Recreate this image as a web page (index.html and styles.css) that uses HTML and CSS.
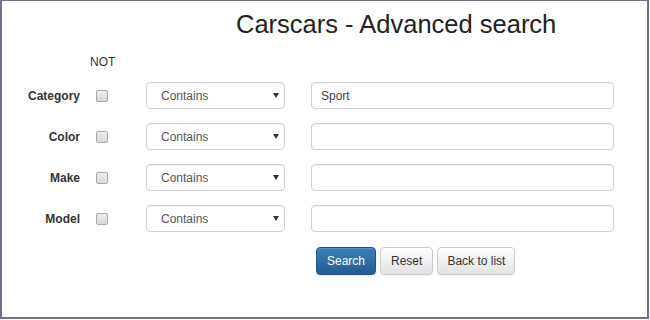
FILE: index.html
```html
<!DOCTYPE html>
<html>
<head>
<meta charset="utf-8">
<link rel="stylesheet" href="styles.css">
</head>
<body>
<div class="frame">
  <h1 class="title">Carscars - Advanced search</h1>
  <div class="not-head"><span class="not">NOT</span></div>
  <form class="rows">
    <div class="row">
      <label class="lbl">Category</label>
      <input class="chk" type="checkbox">
      <div class="sel-wrap"><select class="sel"><option>Contains</option></select></div>
      <input class="txt" type="text" value="Sport">
    </div>
    <div class="row">
      <label class="lbl">Color</label>
      <input class="chk" type="checkbox">
      <div class="sel-wrap"><select class="sel"><option>Contains</option></select></div>
      <input class="txt" type="text" value="">
    </div>
    <div class="row">
      <label class="lbl">Make</label>
      <input class="chk" type="checkbox">
      <div class="sel-wrap"><select class="sel"><option>Contains</option></select></div>
      <input class="txt" type="text" value="">
    </div>
    <div class="row">
      <label class="lbl">Model</label>
      <input class="chk" type="checkbox">
      <div class="sel-wrap"><select class="sel"><option>Contains</option></select></div>
      <input class="txt" type="text" value="">
    </div>
    <div class="actions">
      <button type="button" class="btn btn-primary">Search</button>
      <button type="button" class="btn btn-default">Reset</button>
      <button type="button" class="btn btn-default btn-wide">Back to list</button>
    </div>
  </form>
</div>
</body>
</html>
```
FILE: styles.css
```css
html, body {
  margin: 0;
  padding: 0;
  background: #fff;
}
body {
  font-family: "Liberation Sans", Arial, sans-serif;
  color: #333;
}
.frame {
  box-sizing: border-box;
  width: 649px;
  height: 319px;
  border: 2px solid #706f96;
  border-top-width: 1px;
  padding-top: 8px;
}
.title {
  margin: 0;
  padding-left: 234px;
  font-size: 25.5px;
  line-height: 30px;
  font-weight: normal;
  color: #222;
}
.not-head {
  margin-top: 16px;
  padding-left: 88px;
  font-size: 12px;
  line-height: 14px;
}
.not {
  color: #333;
}
.rows {
  margin: 13px 0 0 0;
  display: flex;
  flex-direction: column;
  gap: 14px;
}
.row {
  display: flex;
  align-items: center;
  height: 27px;
}
.lbl {
  width: 78px;
  text-align: right;
  font-size: 12px;
  font-weight: bold;
  color: #333;
}
.chk {
  appearance: none;
  -webkit-appearance: none;
  box-sizing: border-box;
  width: 12px;
  height: 12px;
  margin: 1px 0 0 16px;
  border: 1px solid #a9a9a9;
  border-radius: 2px;
  background: linear-gradient(#eeeeee, #d8d8d8);
}
.sel-wrap {
  position: relative;
  margin-left: 38px;
  width: 139px;
  height: 27px;
}
.sel-wrap::after {
  content: "";
  position: absolute;
  right: 6px;
  top: 11px;
  border-left: 3px solid transparent;
  border-right: 3px solid transparent;
  border-top: 5px solid #333;
  pointer-events: none;
}
.sel {
  appearance: none;
  -webkit-appearance: none;
  box-sizing: border-box;
  width: 100%;
  height: 100%;
  margin: 0;
  padding: 0 0 0 14px;
  font-family: "Liberation Sans", Arial, sans-serif;
  font-size: 12px;
  color: #555;
  background: #fff;
  border: 1px solid #d0d0d0;
  border-radius: 4px;
  box-shadow: inset 0 1px 1px rgba(0,0,0,0.05);
}
.txt {
  box-sizing: border-box;
  margin: 0 0 0 26px;
  width: 303px;
  height: 27px;
  padding: 0 9px;
  font-family: "Liberation Sans", Arial, sans-serif;
  font-size: 12px;
  color: #444;
  background: #fff;
  border: 1px solid #d0d0d0;
  border-radius: 4px;
  box-shadow: inset 0 1px 1px rgba(0,0,0,0.06);
  outline: none;
}
.actions {
  display: flex;
  gap: 4px;
  margin-top: 1px;
  padding-left: 314px;
}
.btn {
  box-sizing: border-box;
  height: 28px;
  padding: 0 10px;
  font-family: "Liberation Sans", Arial, sans-serif;
  font-size: 12px;
  border-radius: 4px;
  border: 1px solid #ccc;
  cursor: pointer;
}
.btn-wide {
  padding: 0 9px;
}
.btn-primary {
  color: #fff;
  background: linear-gradient(#3a80bf, #255c8d);
  border-color: #245580;
  box-shadow: inset 0 1px 0 rgba(255,255,255,0.15), 0 1px 1px rgba(0,0,0,0.08);
}
.btn-default {
  color: #333;
  background: linear-gradient(#ffffff, #e2e2e2);
  border-color: #cccccc;
  box-shadow: 0 1px 1px rgba(0,0,0,0.06);
}
```
